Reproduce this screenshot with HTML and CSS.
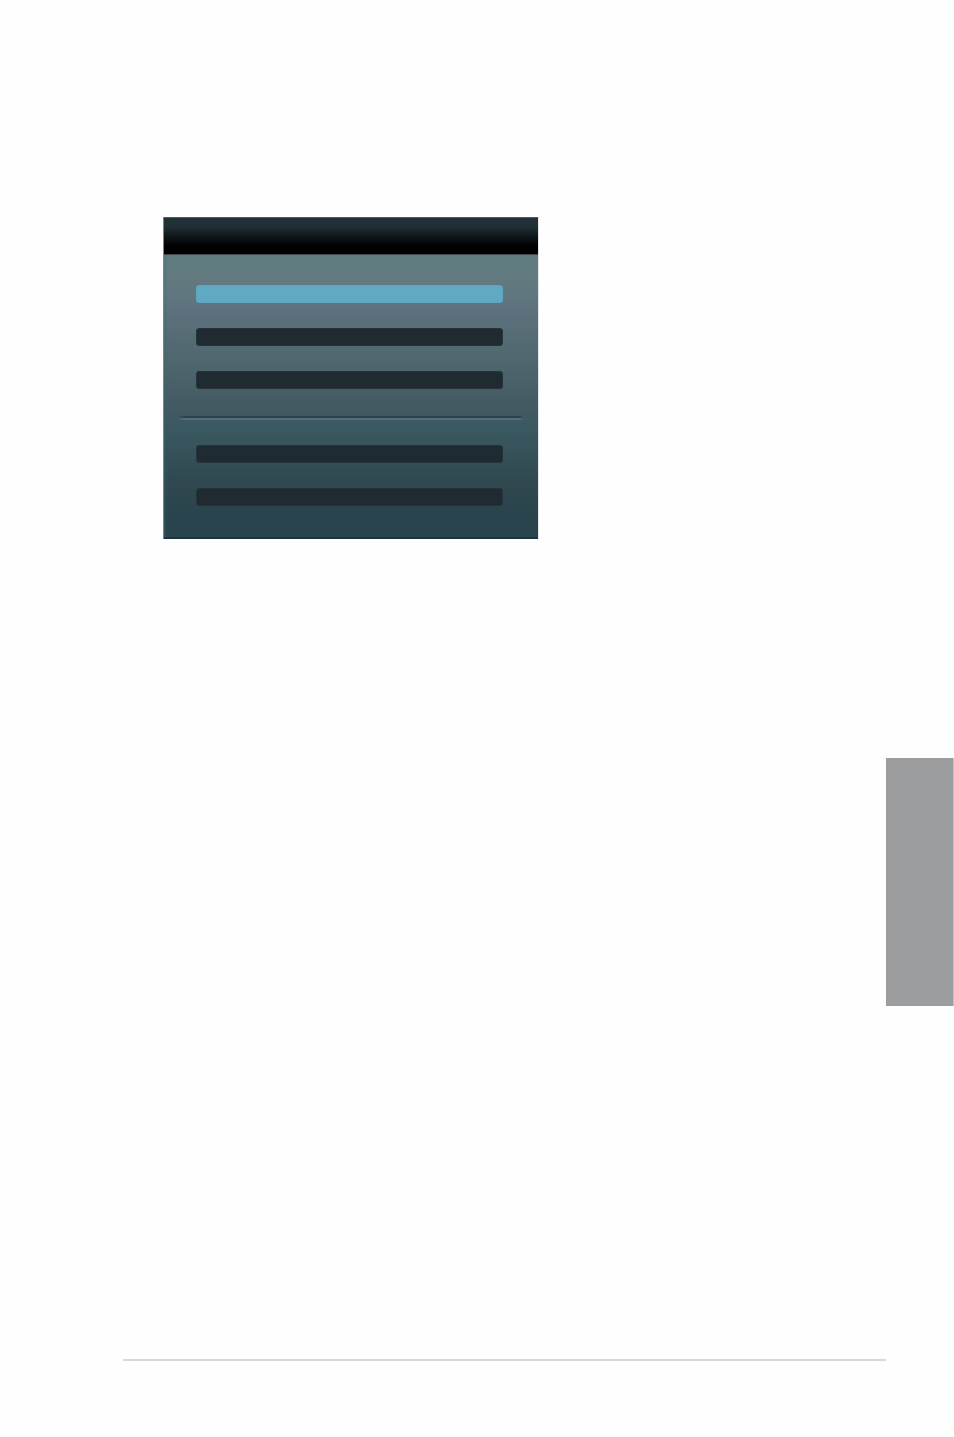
FILE: index.html
```html
<!DOCTYPE html>
<html lang="en">
<head>
    <meta charset="UTF-8">
    <meta name="viewport" content="width=device-width, initial-scale=1.0">
    <title>Menu</title>
    <link rel="stylesheet" href="styles.css">
</head>
<body>
    <div class="page">
        <main class="content">
            <section class="panel">
                <header class="panel-header"></header>
                <div class="panel-body">
                    <div class="menu-group">
                        <button type="button" class="menu-item active" aria-label="Option 1"></button>
                        <button type="button" class="menu-item" aria-label="Option 2"></button>
                        <button type="button" class="menu-item" aria-label="Option 3"></button>
                    </div>
                    <hr class="divider">
                    <div class="menu-group">
                        <button type="button" class="menu-item" aria-label="Option 4"></button>
                        <button type="button" class="menu-item" aria-label="Option 5"></button>
                    </div>
                </div>
            </section>
            <footer class="footer"></footer>
        </main>
        <aside class="side">
            <div class="side-tab"></div>
        </aside>
    </div>
</body>
</html>
```
FILE: styles.css
```css
* {
    margin: 0;
    padding: 0;
    box-sizing: border-box;
}

body {
    font-family: "Liberation Sans", Arial, sans-serif;
    background: #fefefe;
}

.page {
    display: flex;
    min-height: 100vh;
}

.content {
    flex: 1;
    display: flex;
    flex-direction: column;
    padding: 217px 0 76px 123px;
}

/* Menu panel */
.panel {
    width: 100%;
    max-width: 375px;
    margin-left: 40px;
    border-left: 1px solid #71878c;
    box-shadow: 1px 0 0 #e4e8e9;
}

.panel-header {
    height: 38px;
    background: linear-gradient(#223238 0%, #202f34 25%, #10181b 50%, #000 78%, #000 100%);
    border-top: 1px solid #4b5e64;
    border-bottom: 1px solid #42474e;
}

.panel-body {
    padding: 30px 35px 31px 32px;
    background: linear-gradient(#5f7d80 0%, #637a80 8%, #607680 15%, #5a6f7a 23%, #50686f 36%, #445b64 52%, #3a5860 62%, #304850 81%, #29434c 93%, #29434c 100%);
    border-bottom: 2px solid #1c3641;
    box-shadow: inset 2px 0 3px rgba(60, 105, 112, 0.3);
}

.menu-group {
    display: flex;
    flex-direction: column;
    gap: 25px;
}

.menu-item {
    width: 100%;
    height: 18px;
    border: 1px solid #25343a;
    border-radius: 3px;
    background: #1f2b30;
    cursor: pointer;
}

.menu-item.active {
    border-color: #5fa5be;
    background: #60a9c3;
}

.divider {
    height: 4px;
    margin: 27px -20px 25px -18px;
    border: 0;
    background: linear-gradient(#2c434d 50%, #566c78 50%);
    mask-image: linear-gradient(90deg, transparent, #000 6px, #000 calc(100% - 3px), transparent);
}

.footer {
    margin-top: auto;
    border-top: 2px solid #d8d8d8;
}

/* Chapter tab on the right edge */
.side {
    width: 68px;
    padding-top: 758px;
}

.side-tab {
    height: 248px;
    background: #9c9d9f;
    border-right: 1px solid #bebfc0;
}
```
